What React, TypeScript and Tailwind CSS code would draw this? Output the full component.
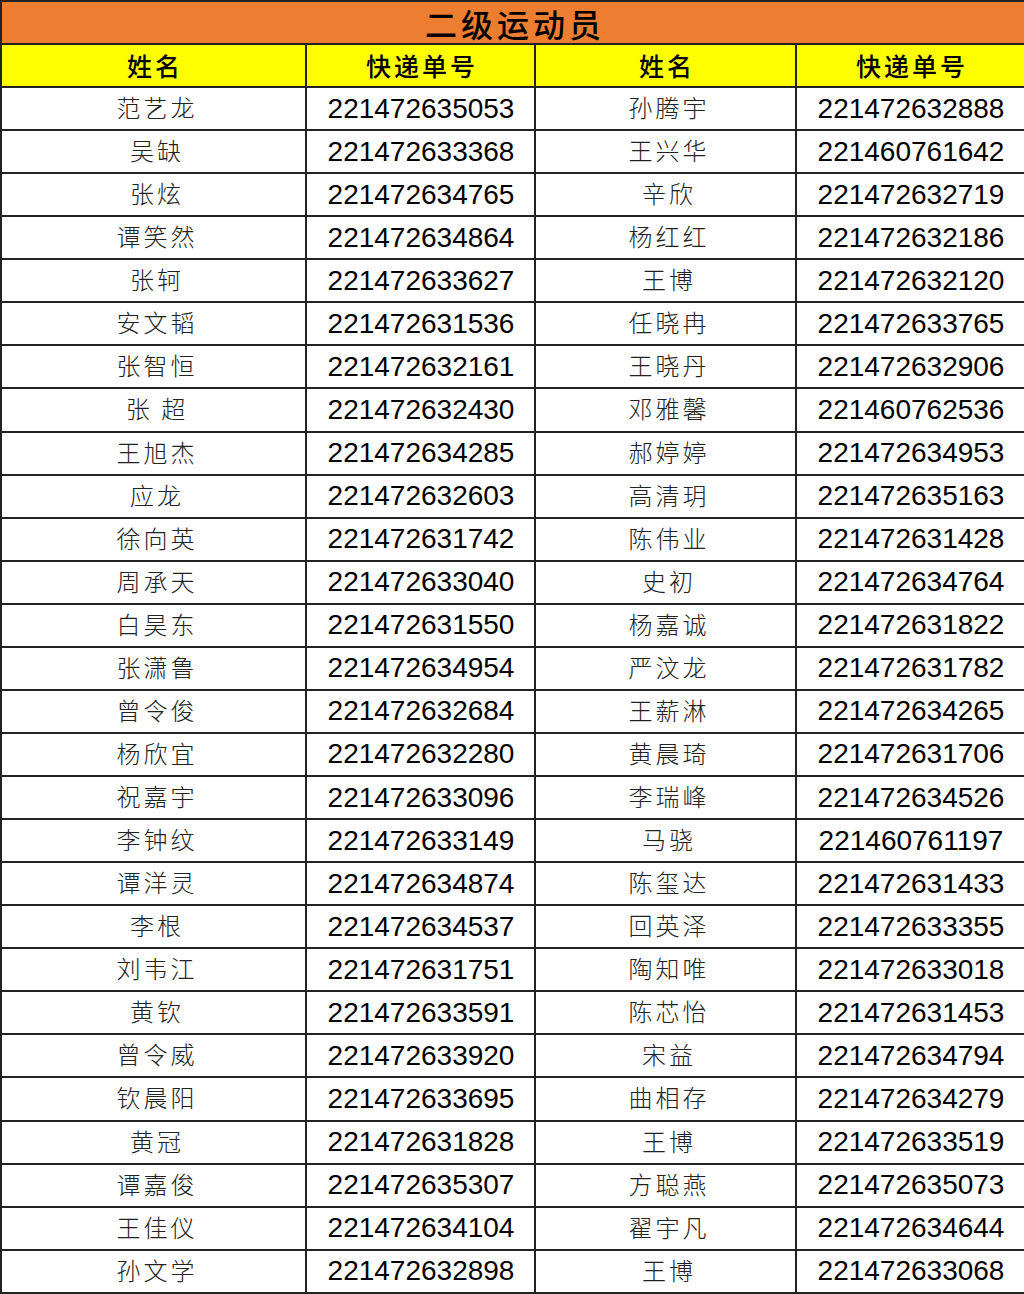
const rows: [string, string, string, string][] = [
  ['范艺龙', '221472635053', '孙腾宇', '221472632888'],
  ['吴缺', '221472633368', '王兴华', '221460761642'],
  ['张炫', '221472634765', '辛欣', '221472632719'],
  ['谭笑然', '221472634864', '杨红红', '221472632186'],
  ['张轲', '221472633627', '王博', '221472632120'],
  ['安文韬', '221472631536', '任晓冉', '221472633765'],
  ['张智恒', '221472632161', '王晓丹', '221472632906'],
  ['张 超', '221472632430', '邓雅馨', '221460762536'],
  ['王旭杰', '221472634285', '郝婷婷', '221472634953'],
  ['应龙', '221472632603', '高清玥', '221472635163'],
  ['徐向英', '221472631742', '陈伟业', '221472631428'],
  ['周承天', '221472633040', '史初', '221472634764'],
  ['白昊东', '221472631550', '杨嘉诚', '221472631822'],
  ['张潇鲁', '221472634954', '严汶龙', '221472631782'],
  ['曾令俊', '221472632684', '王薪淋', '221472634265'],
  ['杨欣宜', '221472632280', '黄晨琦', '221472631706'],
  ['祝嘉宇', '221472633096', '李瑞峰', '221472634526'],
  ['李钟纹', '221472633149', '马骁', '221460761197'],
  ['谭洋灵', '221472634874', '陈玺达', '221472631433'],
  ['李根', '221472634537', '回英泽', '221472633355'],
  ['刘韦江', '221472631751', '陶知唯', '221472633018'],
  ['黄钦', '221472633591', '陈芯怡', '221472631453'],
  ['曾令威', '221472633920', '宋益', '221472634794'],
  ['钦晨阳', '221472633695', '曲相存', '221472634279'],
  ['黄冠', '221472631828', '王博', '221472633519'],
  ['谭嘉俊', '221472635307', '方聪燕', '221472635073'],
  ['王佳仪', '221472634104', '翟宇凡', '221472634644'],
  ['孙文学', '221472632898', '王博', '221472633068'],
]

const cjk = "font-['Noto_Sans_CJK_SC',sans-serif]"
const num = "font-['Liberation_Sans',Arial,sans-serif]"
const cell = 'border-2 border-[#222] text-center p-0'

export default function App() {
  return (
    <div className="w-[1024px] h-[1294px] bg-white">
      <table className="w-[1024px] h-[1294px] border-collapse table-fixed">
        <colgroup>
          <col className="w-[305px]" />
          <col className="w-[229px]" />
          <col className="w-[261px]" />
          <col className="w-[229px]" />
        </colgroup>
        <thead>
          <tr className="h-[43px]">
            <th colSpan={4} className={`${cell} pl-[4px] pt-[1px] bg-[#ed7d31] ${cjk} text-[32px] font-medium tracking-[4px] text-black leading-none`}>
              二级运动员
            </th>
          </tr>
          <tr className="h-[43px]">
            {['姓名', '快递单号', '姓名', '快递单号'].map((h, i) => (
              <th key={i} className={`${cell} pl-[3px] bg-[#ffff00] ${cjk} text-[25px] font-medium tracking-[3px] text-black leading-none`}>
                {h}
              </th>
            ))}
          </tr>
        </thead>
        <tbody>
          {rows.map((r, i) => (
            <tr key={i} className="h-[43px]">
              <td className={`${cell} pl-[7px] pb-[3px] ${cjk} text-[24px] font-light tracking-[3px] text-[#222] leading-none whitespace-pre`}>{r[0]}</td>
              <td className={`${cell} pl-[1px] ${num} text-[28px] text-black leading-none`}>{r[1]}</td>
              <td className={`${cell} pl-[7px] pb-[3px] ${cjk} text-[24px] font-light tracking-[3px] text-[#222] leading-none whitespace-pre`}>{r[2]}</td>
              <td className={`${cell} pl-[1px] ${num} text-[28px] text-black leading-none`}>{r[3]}</td>
            </tr>
          ))}
        </tbody>
      </table>
    </div>
  )
}
